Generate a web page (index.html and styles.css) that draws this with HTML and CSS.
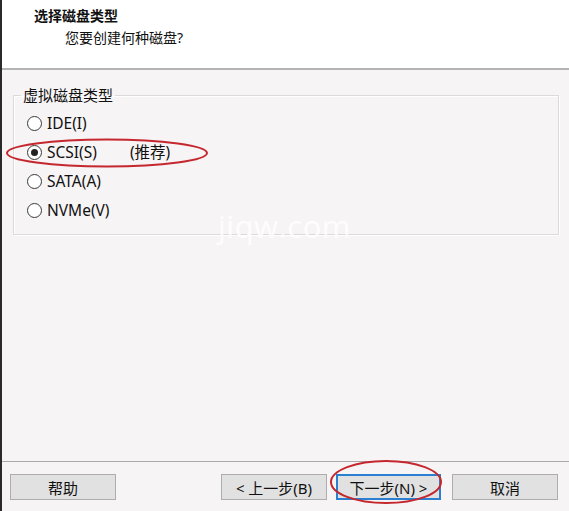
FILE: index.html
```html
<!DOCTYPE html>
<html lang="zh-CN">
<head>
<meta charset="utf-8">
<link rel="stylesheet" href="styles.css">
</head>
<body>
<div class="dialog">
  <div class="header">
    <div class="title">选择磁盘类型</div>
    <div class="subtitle">您要创建何种磁盘?</div>
  </div>
  <div class="content">
    <fieldset class="group">
      <legend>虚拟磁盘类型</legend>
      <label class="option"><span class="radio"></span>IDE(I)</label>
      <label class="option"><span class="radio checked"></span>SCSI(S)<span class="rec">(推荐)</span></label>
      <label class="option"><span class="radio"></span>SATA(A)</label>
      <label class="option"><span class="radio"></span>NVMe(V)</label>
    </fieldset>
  </div>
  <div class="footer">
    <button class="btn">帮助</button>
    <span class="spacer"></span>
    <button class="btn">&lt; 上一步(B)</button>
    <button class="btn primary">下一步(N) &gt;</button>
    <button class="btn cancel">取消</button>
  </div>
  <div class="watermark">jiqw.com</div>
  <svg class="mark mark-scsi" width="204" height="32" viewBox="0 0 204 32"><ellipse cx="102" cy="16" rx="100" ry="13.5" fill="none" stroke="#c4282e" stroke-width="2"/></svg>
  <svg class="mark mark-next" width="116" height="48" viewBox="0 0 116 48"><ellipse cx="57" cy="24" rx="55" ry="21" fill="none" stroke="#c4282e" stroke-width="2"/></svg>
</div>
</body>
</html>
```
FILE: styles.css
```css
html, body {
  margin: 0;
  padding: 0;
}
body {
  width: 569px;
  height: 511px;
  overflow: hidden;
  font-family: "Noto Sans", "Noto Sans CJK SC", sans-serif;
  font-size: 14px;
  color: #111;
}
.dialog {
  position: relative;
  width: 567px;
  height: 511px;
  border-left: 2px solid #2a2a2a;
  display: flex;
  flex-direction: column;
  background: #f7f4f5;
}
.header {
  height: 70px;
  background: #fff;
  border-bottom: 2px solid #b4b4b4;
  box-sizing: border-box;
  padding-top: 6px;
}
.title {
  font-weight: bold;
  margin-left: 32px;
  line-height: 20px;
}
.subtitle {
  margin-left: 63px;
  line-height: 20px;
  margin-top: 2px;
}
.content {
  height: 392px;
  border-bottom: 1px solid #aaa;
  box-sizing: border-box;
  padding: 16px 10px 0 11px;
}
.group {
  margin: 0;
  padding: 5px 0 10px 14px;
  border: 1px solid #dcdadb;
  box-shadow: inset 1px 1px 0 #fff, 1px 1px 0 #fff;
  height: 149px;
  box-sizing: border-box;
  font-size: 15px;
}
.group legend {
  padding: 0 2px;
  margin-left: -7px;
  line-height: 18px;
  color: #111;
}
.option {
  display: flex;
  align-items: center;
  height: 29px;
  line-height: 29px;
  font-size: 15.5px;
}
.radio {
  width: 15px;
  height: 15px;
  border: 1px solid #3a3a3a;
  border-radius: 50%;
  background: #fff;
  margin-right: 5px;
  margin-left: -1px;
  box-sizing: border-box;
  position: relative;
}
.radio.checked::after {
  content: "";
  position: absolute;
  left: 3px;
  top: 3px;
  width: 7px;
  height: 7px;
  border-radius: 50%;
  background: #222;
}
.rec {
  margin-left: 33px;
}
.footer {
  flex: 1;
  display: flex;
  align-items: flex-start;
  padding: 12px 0 0 8px;
}
.spacer {
  width: 96px;
}
.btn {
  width: 106px;
  height: 26px;
  font-family: "Noto Sans", "Noto Sans CJK SC", sans-serif;
  font-size: 15px;
  color: #111;
  background: #e1e1e1;
  border: 1px solid #adadad;
  padding: 0;
  margin-right: 9px;
}
.btn.primary {
  width: 105px;
  border: 2px solid #2a7fd0;
  margin-right: 11px;
}
.btn.cancel {
  margin-right: 0;
}
.watermark {
  position: absolute;
  left: 216px;
  top: 205px;
  font-family: "Open Sans", sans-serif;
  font-size: 31px;
  color: rgba(255, 255, 255, 0.9);
  letter-spacing: 0.5px;
}
.mark {
  position: absolute;
}
.mark-scsi {
  left: 3px;
  top: 137px;
}
.mark-next {
  left: 327px;
  top: 458px;
}
```
